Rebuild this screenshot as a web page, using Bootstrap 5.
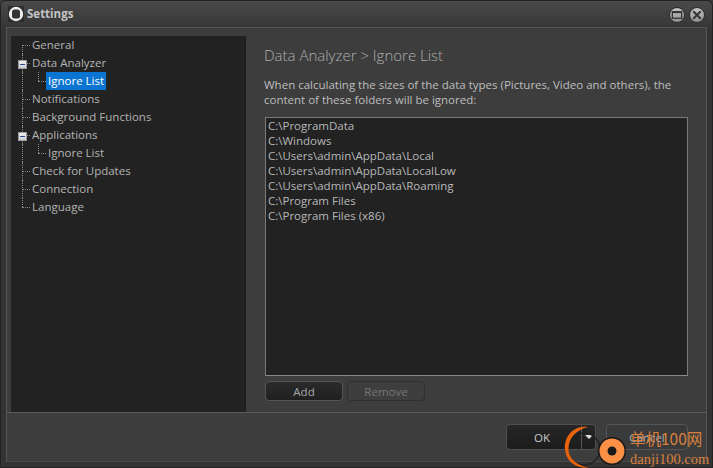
<!DOCTYPE html>
<html lang="en">
<head>
    <meta charset="UTF-8">
    <meta name="viewport" content="width=device-width, initial-scale=1.0">
    <link href="https://cdn.jsdelivr.net/npm/bootstrap@5.3.2/dist/css/bootstrap.min.css" rel="stylesheet"/>
    <script src="https://cdn.jsdelivr.net/npm/bootstrap@5.3.2/dist/js/bootstrap.bundle.min.js"></script>
    <title>Settings</title>
    <style>
        html, body { height: 100%; }
        body {
            background: #3a3a3a;
            color: #c8c8c8;
            font-family: "Open Sans", "Noto Sans", sans-serif;
            font-size: 11.5px;
            overflow: hidden;
        }
        .app-window {
            position: relative;
            width: 713px;
            height: 468px;
            padding: 0 5px 5px;
            background: linear-gradient(#4a4a4a, #333 30px);
            border: 1px solid #222;
            border-radius: 6px 6px 0 0;
        }
        .title-bar { height: 26px; }
        .title-text { font-weight: 700; color: #c4c4c4; font-size: 11.5px; margin-left: 3px; }
        .app-logo { width: 16px; height: 16px; margin-left: 2px; }
        .win-btn {
            width: 16px; height: 16px;
            border-radius: 50%;
            background: linear-gradient(#c4c4c4, #8e8e8e);
            border: 1px solid #2c2c2c;
            padding: 0;
        }
        .win-btn svg { display: block; width: 14px; height: 14px; }
        .win-group { margin-right: 2px; margin-top: 1px; }
        .inner-frame {
            height: 435px;
            background: #3d3d3d;
            border: 1px solid #555;
            border-bottom-color: #4a4a4a;
        }
        .top-area { height: 385px; padding: 8px 0 0 4px; border-bottom: 1px solid #5c5c5c; }
        .tree-panel {
            width: 235px;
            height: 376px;
            background: #222;
            border-right: 1px solid #191919;
            flex: none;
        }
        .tree-row {
            position: relative;
            height: 18px;
            line-height: 17px;
            padding-left: 21px;
            color: #b4b4b4;
            white-space: nowrap;
        }
        .tree-row.child { padding-left: 35px; }
        .tree-label { display: inline-block; height: 18px; padding: 0 2px 0 0; }
        .tree-row.child .tree-label { padding: 0 2px; }
        .tree-label.selected { background: #0a74d2; color: #fff; }
        .dot-h {
            position: absolute; left: 11px; top: 9px; width: 8px;
            border-top: 1px dotted #888;
        }
        .dot-v {
            position: absolute; left: 11px; top: 0; height: 18px;
            border-left: 1px dotted #888;
        }
        .dot-v.half { height: 9px; }
        .dot-v.first { top: 9px; height: 9px; }
        .dot-v.trunk { left: 11px; height: 18px; }
        .child .dot-h { left: 27px; width: 8px; }
        .child .dot-v:not(.trunk) { left: 27px; height: 9px; }
        .expander {
            position: absolute; left: 7px; top: 6px;
            width: 9px; height: 9px;
            background: linear-gradient(#f0f0f0, #cfcfcf);
            border: 1px solid #999;
        }
        .expander::after {
            content: ""; position: absolute; left: 1px; top: 3px;
            width: 5px; height: 1px; background: #33489a;
        }
        .content-panel { padding: 8px 18px 0 18px; flex: 1; min-width: 0; }
        .page-heading { font-size: 15px; font-weight: 300; color: #adadad; line-height: 22px; margin: 0 0 11px; }
        .page-note { color: #bdbdbd; line-height: 15px; margin: 0 0 10px; }
        .folder-list {
            height: 259px;
            background: #222;
            border: 1px solid #7a7a7a;
            border-bottom-color: #888;
            padding: 0 2px;
            margin: 0 0 5px 1px;
        }
        .folder-list .list-group-item {
            background: transparent; border: 0; padding: 0;
            color: #b8b8b8; line-height: 15px; font-size: 11.5px;
        }
        .button-row { margin-left: 1px; }
        .dark-btn {
            height: 20px; width: 78px;
            padding: 0; font-size: 11.5px; line-height: 17px;
            color: #a8a8a8;
            background: linear-gradient(#2b2b2b, #1f1f1f);
            border: 1px solid #555;
            border-radius: 4px;
        }
        .dark-btn:disabled {
            color: #777; opacity: 1;
            background: #3e3e3e; border-color: #2f2f2f;
        }
        .bottom-bar { height: 48px; padding: 11px 18px 0 0; gap: 10px; }
        .big-btn {
            height: 26px; line-height: 23px;
            background: linear-gradient(#262626, #1c1c1c);
            color: #c8c8c8;
            border-color: #4f4f4f;
        }
        .ok-group { width: 90px; }
        .ok-group .ok-main {
            width: 75px; border-right: 0;
            padding-right: 4px;
            border-radius: 4px 0 0 4px;
        }
        .ok-group .ok-drop {
            width: 15px; border-left: 1px solid #555;
            border-radius: 0 4px 4px 0;
            display: flex; align-items: center; justify-content: center;
        }
        .caret-down {
            width: 0; height: 0;
            border-left: 4px solid transparent; border-right: 4px solid transparent;
            border-top: 4px solid #ddd;
        }
        .cancel-btn { background: #3a3a3a; width: 82px; color: #a4acb8; border-color: #555; }
        .watermark { position: absolute; left: 563px; top: 420px; width: 150px; height: 48px; pointer-events: none; }
        .wm-logo { position: absolute; left: 0; top: 0; }
        .wm-cn {
            position: absolute; left: 66px; top: 5px;
            font: 400 15.5px/24px "Noto Sans CJK SC", sans-serif;
            color: #d9803e; white-space: nowrap;
        }
        .wm-en {
            position: absolute; left: 66px; top: 29px;
            font: 400 14.5px/18px "Liberation Serif", serif;
            color: #d9803e; white-space: nowrap;
        }
    </style>
</head>
<body>
    <div class="app-window">
        <div class="title-bar d-flex align-items-center">
            <svg class="app-logo" viewBox="0 0 16 16">
                <rect width="16" height="16" rx="1" fill="#2c2c2c"/>
                <circle cx="8" cy="8" r="7.2" fill="#eee"/>
                <rect x="4" y="3.5" width="8" height="9" rx="2.5" fill="#333"/>
            </svg>
            <span class="title-text">Settings</span>
            <div class="win-group ms-auto d-flex gap-1 align-items-center">
                <button class="win-btn" type="button" aria-label="Maximize">
                    <svg viewBox="0 0 15 15"><rect x="2.5" y="4" width="10" height="7" fill="none" stroke="#333" stroke-width="1.4"/><rect x="2.5" y="3.5" width="10" height="2" fill="#333"/></svg>
                </button>
                <button class="win-btn" type="button" aria-label="Close">
                    <svg viewBox="0 0 15 15"><path d="M3.5 3.5l8 8M11.5 3.5l-8 8" stroke="#333" stroke-width="2" fill="none"/></svg>
                </button>
            </div>
        </div>
        <div class="inner-frame">
            <div class="top-area d-flex">
                <div class="tree-panel">
                    <div class="tree-row"><i class="dot-v first"></i><i class="dot-h"></i><span class="tree-label">General</span></div>
                    <div class="tree-row"><i class="dot-v"></i><i class="dot-h"></i><i class="expander"></i><span class="tree-label">Data Analyzer</span></div>
                    <div class="tree-row child"><i class="dot-v trunk"></i><i class="dot-v"></i><i class="dot-h"></i><span class="tree-label selected">Ignore List</span></div>
                    <div class="tree-row"><i class="dot-v"></i><i class="dot-h"></i><span class="tree-label">Notifications</span></div>
                    <div class="tree-row"><i class="dot-v"></i><i class="dot-h"></i><span class="tree-label">Background Functions</span></div>
                    <div class="tree-row"><i class="dot-v"></i><i class="dot-h"></i><i class="expander"></i><span class="tree-label">Applications</span></div>
                    <div class="tree-row child"><i class="dot-v trunk"></i><i class="dot-v"></i><i class="dot-h"></i><span class="tree-label">Ignore List</span></div>
                    <div class="tree-row"><i class="dot-v"></i><i class="dot-h"></i><span class="tree-label">Check for Updates</span></div>
                    <div class="tree-row"><i class="dot-v"></i><i class="dot-h"></i><span class="tree-label">Connection</span></div>
                    <div class="tree-row"><i class="dot-v half"></i><i class="dot-h"></i><span class="tree-label">Language</span></div>
                </div>
                <div class="content-panel">
                    <h1 class="page-heading">Data Analyzer &gt; Ignore List</h1>
                    <p class="page-note">When calculating the sizes of the data types (Pictures, Video and others), the content of these folders will be ignored:</p>
                    <ul class="folder-list list-group rounded-0">
                        <li class="list-group-item">C:\ProgramData</li>
                        <li class="list-group-item">C:\Windows</li>
                        <li class="list-group-item">C:\Users\admin\AppData\Local</li>
                        <li class="list-group-item">C:\Users\admin\AppData\LocalLow</li>
                        <li class="list-group-item">C:\Users\admin\AppData\Roaming</li>
                        <li class="list-group-item">C:\Program Files</li>
                        <li class="list-group-item">C:\Program Files (x86)</li>
                    </ul>
                    <div class="button-row d-flex gap-1">
                        <button class="btn dark-btn" type="button">Add</button>
                        <button class="btn dark-btn" type="button" disabled>Remove</button>
                    </div>
                </div>
            </div>
            <div class="bottom-bar d-flex justify-content-end">
                <div class="ok-group d-flex">
                    <button class="btn dark-btn big-btn ok-main" type="button">OK</button>
                    <button class="btn dark-btn big-btn ok-drop" type="button" aria-label="More"><span class="caret-down"></span></button>
                </div>
                <button class="btn dark-btn big-btn cancel-btn" type="button">Cancel</button>
            </div>
        </div>
        <div class="watermark">
            <svg class="wm-logo" width="66" height="48" viewBox="0 0 66 48">
                <circle cx="20" cy="28" r="16" fill="none" stroke="#222" stroke-width="1.5"/>
                <path d="M24 6C9 4 0 16 1 28C2 40 10 47 25 47C12 44 4.500 37 4.500 28C4.500 17 12 9 24 6Z" fill="#e8640c"/>
                <circle cx="48" cy="30" r="14" fill="#191919"/>
                <circle cx="48" cy="30" r="12.500" fill="#fb9146"/>
                <circle cx="48" cy="30" r="4.500" fill="#191919"/>
            </svg>
            <span class="wm-cn">单机100网</span>
            <span class="wm-en">danji100.com</span>
        </div>
    </div>
</body>
</html>
